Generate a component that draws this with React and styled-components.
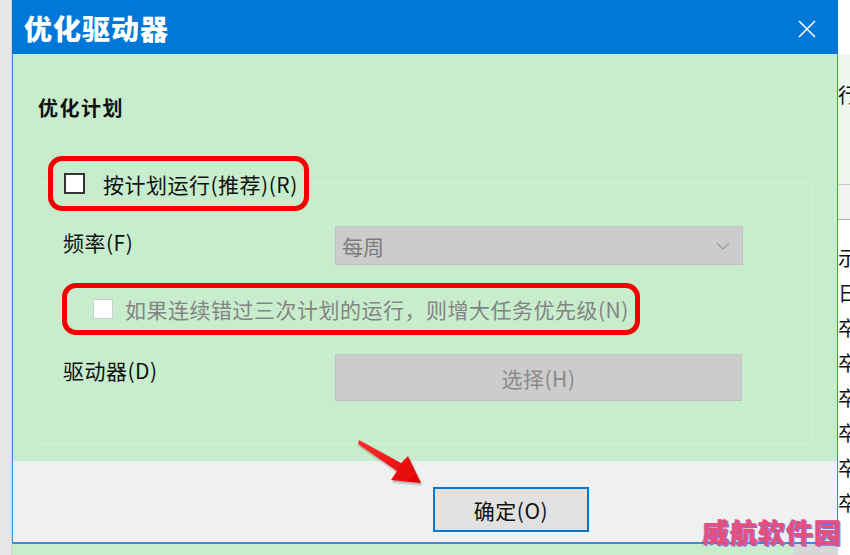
import React from 'react';
import styled, { createGlobalStyle } from 'styled-components';

const GlobalStyle = createGlobalStyle`
  html, body {
    margin: 0;
    padding: 0;
    background: #c7edcc;
  }
  body {
    font-family: "Noto Sans CJK SC", "Noto Sans", sans-serif;
  }
`;

const App = () => (
  <>
    <GlobalStyle />
    <Page>
      <LeftStrip />

      <Center>
        <Dialog>
          <TitleBar>
            <Title>优化驱动器</Title>
            <CloseButton>
              <svg width="18" height="18" viewBox="0 0 18 18">
                <path d="M1 1 L17 17 M17 1 L1 17" stroke="#fff" strokeWidth="1.6" />
              </svg>
            </CloseButton>
          </TitleBar>

          <Body>
            <Heading>优化计划</Heading>

            <Group>
              <Callout $legend>
                <Check />
                <CheckLabel>按计划运行(推荐)(R)</CheckLabel>
              </Callout>

              <FieldRow>
                <FieldLabel>频率(F)</FieldLabel>
                <Select>
                  每周
                  <svg width="14" height="8" viewBox="0 0 14 8">
                    <path d="M1 1 L7 7 L13 1" fill="none" stroke="#9a9a9a" strokeWidth="1.2" />
                  </svg>
                </Select>
              </FieldRow>

              <Callout $wide>
                <Check $disabled />
                <CheckLabel $disabled>如果连续错过三次计划的运行，则增大任务优先级(N)</CheckLabel>
              </Callout>

              <FieldRow $tall>
                <FieldLabel>驱动器(D)</FieldLabel>
                <PickButton>选择(H)</PickButton>
              </FieldRow>
            </Group>
          </Body>

          <Footer>
            <OkButton>确定(O)</OkButton>
          </Footer>
        </Dialog>

        <BottomBand>
          <BandGreen />
          <BandGray />
        </BottomBand>
      </Center>

      <RightStrip>
        <BgTop />
        <BgPane>行</BgPane>
        <BgHeader />
        <BgList>
          {['示', '日', '卒', '卒', '卒', '卒', '卒', '卒'].map((c, i) => (
            <BgRow key={i}>{c}</BgRow>
          ))}
        </BgList>
      </RightStrip>

      <Arrow width="80" height="60" viewBox="0 0 80 60">
        <defs>
          <linearGradient id="ag" x1="0" y1="0" x2="1" y2="1">
            <stop offset="0" stopColor="#ff3030" />
            <stop offset="1" stopColor="#e00000" />
          </linearGradient>
          <filter id="as" x="-20%" y="-20%" width="150%" height="150%">
            <feDropShadow dx="1" dy="2" stdDeviation="1.2" floodColor="#000" floodOpacity="0.3" />
          </filter>
        </defs>
        <polygon
          points="2,3 44,26 51,19 64,46 34,43 40,34 1,7"
          fill="url(#ag)"
          filter="url(#as)"
        />
      </Arrow>

      <Watermark>威航软件园</Watermark>
    </Page>
  </>
);

// page frame
const Page = styled.div`
  position: relative;
  display: flex;
  width: 850px;
  height: 555px;
  overflow: hidden;
`;

const LeftStrip = styled.div`
  width: 12px;
  flex: none;
  background: #e6e6e6;
  box-shadow: inset -1px 0 0 #d4d4d4;
`;

const Center = styled.div`
  width: 826px;
  flex: none;
  display: flex;
  flex-direction: column;
`;

// dialog window
const Dialog = styled.section`
  display: flex;
  flex-direction: column;
  border: 1px solid #3b8dd6;
  border-top-color: #0078d7;
  border-bottom-width: 2px;
  border-bottom-color: #3b8dd6;
`;

const TitleBar = styled.header`
  height: 53px;
  display: flex;
  align-items: center;
  justify-content: space-between;
  padding: 0 22px 0 12px;
  background: #0078d7;
  margin: 0 -1px;
`;

const Title = styled.h1`
  margin: 0;
  color: #fff;
  font-size: 28px;
  font-weight: 900;
  letter-spacing: 1px;
  line-height: 53px;
  padding-top: 2px;
`;

const CloseButton = styled.div`
  display: flex;
  align-items: center;
  justify-content: center;
  width: 18px;
  height: 18px;
  margin-top: 2px;
`;

const Body = styled.div`
  height: 407px;
  box-sizing: border-box;
  padding: 42px 0 0 24px;
  background: #c7edcc;
`;

const Heading = styled.h2`
  margin: 0 0 0 1px;
  font-size: 20px;
  line-height: 24px;
  font-weight: 700;
  color: #111;
  letter-spacing: 1.5px;
`;

const Group = styled.div`
  margin-top: 62px;
  width: 776px;
  height: 262px;
  box-sizing: border-box;
  border: 1px solid #d4f0d8;
  display: flex;
  flex-direction: column;
  align-items: flex-start;
`;

// red annotation outline around a checkbox row
const Callout = styled.div`
  display: inline-flex;
  align-items: center;
  box-sizing: border-box;
  height: ${p => (p.$legend ? 55 : 52)}px;
  width: ${p => (p.$wide ? '578px' : 'auto')};
  margin-top: ${p => (p.$legend ? '-27px' : '18px')};
  margin-left: ${p => (p.$legend ? '10px' : '24px')};
  padding: ${p => (p.$legend ? '0 6px 0 11px' : '0 6px 0 26px')};
  gap: ${p => (p.$legend ? 18 : 12)}px;
  border: 5px solid #f40000;
  border-radius: 14px;
  background: #c7edcc;
`;

const Check = styled.span`
  flex: none;
  box-sizing: border-box;
  width: ${p => (p.$disabled ? 20 : 21)}px;
  height: ${p => (p.$disabled ? 20 : 21)}px;
  background: #fff;
  border: ${p => (p.$disabled ? '1px solid #cfcfcf' : '2px solid #333')};
`;

const CheckLabel = styled.span`
  font-size: 21px;
  letter-spacing: 0.5px;
  line-height: 26px;
  color: ${p => (p.$disabled ? '#848484' : '#111')};
  white-space: nowrap;
`;

const FieldRow = styled.div`
  display: flex;
  align-items: flex-start;
  margin-top: ${p => (p.$tall ? 19 : 15)}px;
  padding-left: 25px;
`;

const FieldLabel = styled.span`
  width: 272px;
  font-size: 21px;
  letter-spacing: 0.5px;
  line-height: 26px;
  color: #111;
  margin-top: 3px;
`;

const Select = styled.div`
  width: 408px;
  height: 39px;
  box-sizing: border-box;
  display: flex;
  align-items: center;
  justify-content: space-between;
  padding: 0 12px 0 6px;
  background: #cccccc;
  border: 1px solid #c2c2c2;
  color: #7c7c7c;
  font-size: 21px;
`;

const PickButton = styled.div`
  width: 407px;
  height: 47px;
  box-sizing: border-box;
  display: flex;
  align-items: center;
  justify-content: center;
  background: #cccccc;
  border: 1px solid #c2c2c2;
  color: #8a8a8a;
  font-size: 21px;
  letter-spacing: 0.5px;
`;

const Footer = styled.footer`
  height: 81px;
  background: #f0f0f0;
  padding: 26px 0 0 420px;
  box-sizing: border-box;
`;

const OkButton = styled.div`
  width: 156px;
  height: 45px;
  box-sizing: border-box;
  display: flex;
  align-items: center;
  justify-content: center;
  background: #e1e1e1;
  border: 2px solid #0078d7;
  color: #111;
  font-size: 21px;
  letter-spacing: 0.5px;
`;

const BottomBand = styled.div`
  height: 11px;
  display: flex;
`;

const BandGreen = styled.div`
  flex: 1;
  background: #c7edcc;
`;

const BandGray = styled.div`
  width: 44px;
  background: #d6d6d6;
`;

// background window peeking out on the right
const RightStrip = styled.div`
  width: 12px;
  flex: none;
  display: flex;
  flex-direction: column;
  overflow: hidden;
  font-size: 20px;
  color: #111;
  white-space: nowrap;
`;

const BgTop = styled.div`
  height: 54px;
  background: #fff;
`;

const BgPane = styled.div`
  height: 131px;
  box-sizing: border-box;
  padding-top: 26px;
  background: #eef6ee;
  border-bottom: 1px solid #c8c8c8;
`;

const BgHeader = styled.div`
  height: 34px;
  background: #f2f2f2;
  border-bottom: 1px solid #a8a8a8;
`;

const BgList = styled.div`
  flex: 1;
  background: #fff;
  padding-top: 20px;
`;

const BgRow = styled.div`
  height: 35px;
  line-height: 35px;
`;

const Arrow = styled.svg`
  position: absolute;
  left: 357px;
  top: 437px;
`;

const Watermark = styled.div`
  position: absolute;
  left: 702px;
  top: 512px;
  font-size: 27px;
  font-weight: 900;
  letter-spacing: 1px;
  color: #e64f7c;
  text-shadow: 1px 1px 0 #7a6fe0, -1px 0 0 rgba(150, 110, 230, 0.6);
`;

export default App;
